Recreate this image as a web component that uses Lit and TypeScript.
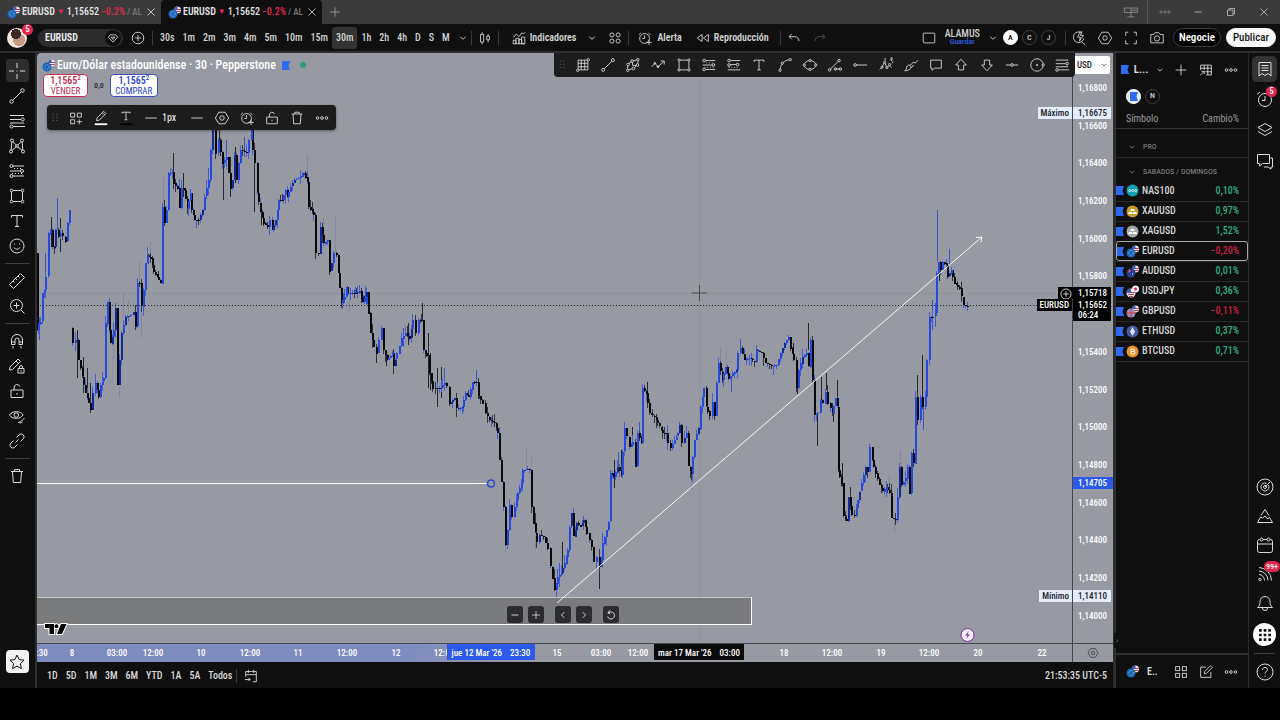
import { LitElement, html, css, svg } from "lit";
import { customElement } from "lit/decorators.js";

/* ---------- icons, drawn on an 18 x 18 grid ---------- */
const clock = svg`<circle cx="8.5" cy="9.5" r="5.5"/><path d="M8.500 6v3.500H6M2 5.500 4.500 3M12.500 3 15 5.500"/>`;
const ICONS: Record<string, unknown> = {
  cross: svg`<path d="M9 1v5M9 12v5M1 9h5M12 9h5M8.500 9h1"/>`,
  trend: svg`<circle cx="3.500" cy="14.500" r="1.700"/><circle cx="14.500" cy="3.500" r="1.700"/><path d="m4.800 13.200 8.400-8.400"/>`,
  hlines: svg`<path d="M2 3.500h14M2 7.500h11M5 14.500h12M2 11h14"/><circle cx="14.700" cy="7.500" r="1.500"/><circle cx="3.500" cy="14.500" r="1.500"/>`,
  pattern: svg`<circle cx="4" cy="3.500" r="1.500"/><circle cx="14" cy="3.500" r="1.500"/><circle cx="3" cy="14.500" r="1.500"/><circle cx="15" cy="14.500" r="1.500"/><circle cx="9" cy="9" r="1.300"/><path d="M3.800 5 3.200 13M14.200 5l.6 8M5 4.700l3 3.200M13 4.700 10 7.900M4 13.300 8 10M14 13.300 10 10"/>`,
  fib: svg`<circle cx="3.500" cy="4" r="1.500"/><circle cx="14" cy="9" r="1.500"/><circle cx="3.500" cy="14" r="1.500"/><path d="M5 4h11M2 9h10.500M5 14h11" /><path stroke-dasharray="1 2" d="M6 6.500h9M4 11.500h10"/>`,
  fib2: svg`<circle cx="3.500" cy="4" r="1.500"/><circle cx="13" cy="8.500" r="1.500"/><circle cx="3.500" cy="9" r="1.500"/><path d="M5 4h11M5 8.500h6.500M2 14.500h14"/><path stroke-dasharray="1 2" d="M3 11.700h12"/>`,
  rect: svg`<path d="M3.500 5v8M14.500 5v8M5 3.500h8M5 14.500h8"/><circle cx="3.500" cy="3.500" r="1.300"/><circle cx="14.500" cy="3.500" r="1.300"/><circle cx="3.500" cy="14.500" r="1.300"/><circle cx="14.500" cy="14.500" r="1.300"/>`,
  text: svg`<path d="M3.500 5.500v-2h11v2M9 3.500v11M7 14.500h4"/>`,
  smile: svg`<circle cx="9" cy="9" r="7"/><path d="M6 10.500c1 2.200 5 2.200 6 0M6.500 6.500v1M11.500 6.500v1"/>`,
  ruler: svg`<path d="m1.500 12.500 11-11 4 4-11 11zM5 9l1.500 1.500M7.500 6.500 9 8M10 4l1.500 1.500"/>`,
  zoom: svg`<circle cx="8.500" cy="8.500" r="6"/><path d="m13 13 3.500 3.500M8.500 5.500v6M5.500 8.500h6"/>`,
  magnet: svg`<path d="M3.500 12.500V8a5.500 5.500 0 0 1 11 0v4.500h-3.500V8a2 2 0 0 0-4 0v4.500zM3.500 10h3.500M11 10h3.500M5 14v2.500M13 14v2.500"/>`,
  penlock: svg`<path d="m1.500 13 .5-3L10 2l2.500 2.500-8 8zM8 4l2.500 2.500"/><path d="M10 11.500h6v4.500h-6zM11.500 11.500V10a1.500 1.500 0 0 1 3 0v1.500M13 13v1.500"/>`,
  lock: svg`<path d="M3 8h12v7.500H3zM6 8V5.500a3 3 0 0 1 5.800-1M9 11v1.800"/>`,
  eye: svg`<path d="M1.500 8C4 3.500 12.500 3.500 15 8c-2.500 4.500-11 4.500-13.500 0z"/><circle cx="8.300" cy="8" r="2.300"/><path d="m16.500 11-3 3c-1 1-2 .5-3 1.500 1.500.7 3.200.3 4-.5"/>`,
  link: svg`<path d="m7.500 10.500 3-3M8.500 5.500l2.700-2.700a2.800 2.800 0 0 1 4 4L12.500 9.500M5.500 8.500l-2.700 2.700a2.800 2.800 0 0 0 4 4l2.700-2.700"/>`,
  trash: svg`<path d="M3 4.500h12M6.500 4.500v-2h5v2M4.500 4.500l.8 11h7.400l.8-11"/>`,
  star: svg`<path d="m9 2 2.100 4.600 4.900.6-3.600 3.400 1 5L9 13.100l-4.400 2.500 1-5L2 7.200l4.900-.6z"/>`,
  plus: svg`<path d="M9 3v12M3 9h12"/>`,
  pluscircle: svg`<circle cx="9" cy="9" r="6.500"/><path d="M9 5.500v7M5.500 9h7"/>`,
  gem: svg`<path d="M5.500 5h7L15 8l-6 6.500L3 8zM6.500 8 9 11l2.500-3z"/>`,
  chev: svg`<path d="m6 7.500 3 3 3-3"/>`,
  candles: svg`<path d="M4 5h3.500v8.500H4zM5.700 2.500V5M5.700 13.500V16M11 7h3v4h-3zM12.500 4.500V7M12.500 11v3"/>`,
  indic: svg`<path d="M2.500 15.500v-4h3v4M5.500 15.500V9.500h3.500v6M9 15.500v-5h3v5M12 15.500V8h3.500v7.500zM2 15.500h13.500M2.500 8.500 6 4.500l3 3 3.500-4.500 1.500 1.500 2-2"/>`,
  four: svg`<circle cx="5.500" cy="5.500" r="2.300"/><circle cx="12.500" cy="5.500" r="2.300"/><circle cx="5.500" cy="12.500" r="2.300"/><circle cx="12.500" cy="12.500" r="2.300"/>`,
  alarm: svg`${clock}<path d="M13.500 11v6M10.500 14h6"/>`,
  alarm2: svg`<circle cx="9" cy="10" r="6.500"/><path d="M9 6v4.500H6M1 4.500 4 2M14 2l3 2.500"/>`,
  rewind: svg`<path d="M8 5v8L2.500 9zM15 5v8L9.500 9z"/>`,
  undo: svg`<path d="M6.500 4.500 3.500 7.500l3 3M3.500 7.500H10c3 0 4.500 2 4.500 5"/>`,
  redo: svg`<path d="m11.500 4.500 3 3-3 3M14.500 7.500H8c-3 0-4.500 2-4.500 5"/>`,
  layout: svg`<rect x="2.500" y="3.500" width="13" height="11" rx="1"/>`,
  search: svg`<path d="M12.500 3.500a6 6 0 1 0 2 6M12 13l4 4M10.500 1.500 7.500 8h3l-1 4.500L14 6h-3.500l2-4.500"/>`,
  hex: svg`<path d="M5.500 2.500h7L16.500 9l-4 6.500h-7L1.500 9z"/><circle cx="9" cy="9" r="2.500"/>`,
  full: svg`<path d="M6 2.500H3v4M12 2.500h3v4M6 15.500H3v-4M12 15.500h3v-4"/>`,
  camera: svg`<path d="M2 5h3.500L7 3h4l1.500 2H16v9.500H2z"/><circle cx="9" cy="9.500" r="3"/>`,
  grid: svg`<path d="M3.500 3.500h11v11h-11zM7 3.500v11M11 3.500v11M3.500 7h11M3.500 11h11"/><circle cx="3" cy="15" r="1.300" fill="#1e1e1e"/><circle cx="15" cy="3" r="1.300" fill="#1e1e1e"/>`,
  brush: svg`<circle cx="3" cy="15" r="1.300"/><circle cx="3.500" cy="8.500" r="1.500"/><circle cx="8" cy="4.500" r="1.500"/><circle cx="14.500" cy="3" r="1.300"/><circle cx="14" cy="9" r="1.500"/><circle cx="9.500" cy="13" r="1.500"/><path d="M3 13.500V10M4.500 7.500 7 5.500M9.500 4.200l3.700-1M14.500 4.500v3M13 10l-2.500 2M8 13.200l-3.700 1.300M8.500 6v3.500h4"/>`,
  zig: svg`<path d="m2 11 3.500-4 3.500 4 6.500-6M12 4.500h4v4"/><circle cx="5.500" cy="7" r="1"/><circle cx="9" cy="11" r="1"/>`,
  curve: svg`<circle cx="3.500" cy="15" r="1.300"/><circle cx="6" cy="7" r="1.300"/><circle cx="15" cy="3" r="1.300"/><path d="M3.700 13.700C4 11 4.500 9.500 5.500 8.300M7 6.200C9 4.500 11 3.500 13.700 3.200"/>`,
  ellipse: svg`<ellipse cx="9" cy="9" rx="6.500" ry="5"/><circle cx="2.500" cy="9" r="1.300" fill="#1e1e1e"/><circle cx="15.500" cy="9" r="1.300" fill="#1e1e1e"/><circle cx="9" cy="4" r="1.300" fill="#1e1e1e"/><circle cx="9" cy="14" r="1.300" fill="#1e1e1e"/>`,
  ruler2: svg`<circle cx="3" cy="14.500" r="1.400"/><circle cx="13.500" cy="4" r="1.400"/><path d="m4 13.500 8.500-8.500M9 13.500h6"/><circle cx="9.500" cy="13.500" r="1.400"/><circle cx="15" cy="13.500" r="1.400"/>`,
  hray: svg`<circle cx="3.500" cy="9" r="1.500"/><path d="M5 9h12"/>`,
  elliott: svg`<path d="m2 14 2-2M5 10.500 7 6.500M8 7l1.500 4M10.500 11.500 13 9M13.500 10.500l1.500 1.500M16 7l1-2"/><circle cx="4.500" cy="11.500" r="1.200"/><circle cx="7.500" cy="6" r="1.200"/><circle cx="10" cy="12" r="1.200"/><circle cx="13" cy="8.500" r="1.200"/><path d="M8 1v3M14 1h2v1.500h-1.500V4H16"/>`,
  paint: svg`<path d="M2 15.500C4.500 15.500 3 9 7 9c3.500.5 2.500 6.500-5 6.500zM8.500 9 12 5.500l1.500 1.500L17 3.500M9.500 12l2.500-3"/>`,
  callout: svg`<path d="M3 3.500h12v9H7.500L4.500 15v-2.500H3z"/>`,
  up: svg`<path d="m9 2.500 6 6.500h-3v5.500H6V9H3z"/>`,
  down: svg`<path d="m9 15.500 6-6.500h-3V3.500H6V9H3z"/>`,
  hline: svg`<circle cx="9" cy="9" r="1.500"/><path d="M2 9h5.500M10.500 9H16"/>`,
  circle: svg`<circle cx="9" cy="9" r="7"/><circle cx="9" cy="9" r=".8"/><circle cx="16" cy="9" r="1.300" fill="#1e1e1e"/>`,
  widgets: svg`<path d="M3 3.500h4.500V8H3zM10.500 3.500H15V8h-4.500zM3 11h4.500v4.500H3zM12.700 10.500v5.500M10 13.200h5.500"/>`,
  squares: svg`<rect x="3" y="3" width="4.500" height="4.500"/><rect x="10.500" y="3" width="4.500" height="4.500"/><rect x="3" y="10.500" width="4.500" height="4.500"/><rect x="10.500" y="10.500" width="4.500" height="4.500"/>`,
  pen: svg`<path d="m4 12 .5-3L12 1.500 14.500 4 7 11.500zM10.500 3l2.500 2.500"/><path stroke="#fff" stroke-width="2" d="M2 16h14"/>`,
  tcolor: svg`<path d="M4.500 4V2.500h9V4M9 2.500v8.500M7.500 11h3"/><path stroke="#000" stroke-width="2" d="M2 16h14"/>`,
  line: svg`<path d="M2.500 9h13"/>`,
  dots: svg`<circle cx="4" cy="9" r="1.500"/><circle cx="9" cy="9" r="1.500"/><circle cx="14" cy="9" r="1.500"/>`,
  drag: svg`<path stroke-width="1.200" stroke-dasharray="1.200 2.400" d="M7 4v10M11 4v10"/>`,
  table: svg`<path d="M3 9V3.500h12v11H9M3 7h12M7 3.500V9M11 3.500v11M8 11h7M2.500 15 7 10.500M4 10.500h3v3"/>`,
  list: svg`<path d="M3 2.500h12v13.500l-3-2.500-3 2-3-2L3 16zM5.500 5.500h7M5.500 8h7M5.500 10.500h7"/>`,
  layers: svg`<path d="m9 2.500 7 4-7 4-7-4zM2 10.500l7 4 7-4"/>`,
  chat: svg`<path d="M1.500 2.500h12v9h-7l-3 2.500v-2.500h-2zM14 6h2.500v9H15v2l-3-2H8"/>`,
  radar: svg`<circle cx="9" cy="9" r="8"/><path d="M12.500 7a4 4 0 1 1-2-1.800M9 9l5-5"/><circle cx="9" cy="9" r="1.500"/>`,
  bulb: svg`<path d="M5 8.500 9 2.500l4 6M1.500 15.500h15l-3-5-2 1.500-2.500-3-2.500 2-2-1z"/>`,
  calendar: svg`<rect x="1.500" y="3.500" width="15" height="13" rx="2"/><path d="M1.500 8h15"/><circle cx="5.500" cy="3.500" r="1.500" fill="#0f0f0f"/><circle cx="12.500" cy="3.500" r="1.500" fill="#0f0f0f"/>`,
  rss: svg`<circle cx="4" cy="14.500" r="1.200"/><path d="M3 9.500a6 6 0 0 1 5.500 6M3 6a9.500 9.500 0 0 1 9 9.500M3 2.500A13 13 0 0 1 15.500 15.500"/>`,
  bell: svg`<path d="M1.500 13.500c2-1.500 2.500-3 2.500-6a5 5 0 0 1 10 0c0 3 .5 4.500 2.500 6zM6.500 14a2.500 2.500 0 0 0 5 0"/>`,
  apps: svg`<path stroke="#0f0f0f" stroke-width="2.600" stroke-dasharray="2.600 2" d="M3.100 4.400h12M3.100 9h12M3.100 13.600h12"/>`,
  help: svg`<circle cx="9" cy="9" r="8"/><path d="M6.500 7c0-3.500 5-3.200 5-.3C11.500 8.500 9 8.500 9 10.500M9 12.500v1"/>`,
  edit: svg`<path d="M9 3.500H3v11.500h11.500V9M7 11l.5-2.500L14 2l2 2-6.500 6.500z"/>`,
  goto: svg`<path d="M3 10V4h12v11.500h-4M3 7.500h12M6 2v3.500M12 2v3.500M2 13h6M6 11l2 2-2 2"/>`,
  minus: svg`<path d="M4.500 9h9"/>`,
  close: svg`<path d="m4.500 4.500 9 9M13.500 4.500l-9 9"/>`,
  restore: svg`<path d="M4.500 6.500h7v7h-7zM6.500 6.500v-2h7v7h-2"/>`,
  left: svg`<path d="M10.500 5.500 7 9l3.500 3.500"/>`,
  right: svg`<path d="M7.500 5.500 11 9l-3.500 3.500"/>`,
  reset: svg`<path d="M5 7.500a4.500 4.500 0 1 1-.3 3.500M8 3 5 5.500 8 8"/>`,
  screens: svg`<path d="M1.500 4.500h15v5h-15zM9 4.500v10M5 14.500h8M9 7h7"/>`,
};
const icon = (name: string, size = "m") =>
  html`<svg class="ic ${size}" viewBox="0 0 18 18" aria-hidden="true">${ICONS[name]}</svg>`;
const ibtn = (name: string, label: string, cls = "") =>
  html`<button class="ib ${cls}" aria-label=${label}>${icon(name)}</button>`;
const flag = html`<svg class="flag" viewBox="0 0 8 9" aria-hidden="true"><path d="M0 0h8L6.500 4.500 8 9H0z" fill="#2f6bf0"/></svg>`;

/* ---------- instrument badges ---------- */
const usTop = svg`<circle cx="9.500" cy="4" r="3.500" fill="#e8e8f0"/><path d="M6.500 5.500h6M7 3.500h6" stroke="#c8324a"/><path d="M6 4a3.500 3.500 0 0 1 3.500-3.500V4z" fill="#3b5bb5"/>`;
const BADGE: Record<string, unknown> = {
  EURUSD: svg`${usTop}<circle cx="5" cy="8" r="4.500" fill="#1c66b8"/><circle cx="5" cy="8" r="2.300" fill="none" stroke="#8ab6e8" stroke-dasharray="1 1"/>`,
  AUDUSD: svg`${usTop}<circle cx="5" cy="8" r="4.500" fill="#24408e"/><path d="M2 6h3M3.500 4.500v3" stroke="#e05060"/><path d="M6 9h1" stroke="#fff"/>`,
  USDJPY: svg`<circle cx="9.500" cy="4" r="3.500" fill="#f4f0f2"/><circle cx="9.500" cy="4" r="1.500" fill="#c8324a"/><circle cx="5" cy="8" r="4.500" fill="#eee"/><path d="M2 9.500h6M4 7.500h5M3 11.500h4" stroke="#c8324a"/><path d="M.5 8A4.500 4.500 0 0 1 5 3.500V8z" fill="#3b5bb5"/>`,
  GBPUSD: svg`${usTop}<circle cx="5" cy="8" r="4.500" fill="#8f9ac8"/><path d="M1 8h8M5 4v8" stroke="#d84a5c" stroke-width="1.500"/>`,
  NAS100: svg`<circle cx="6.500" cy="6.500" r="6" fill="#169fb0"/><circle cx="3.700" cy="6.500" r="1" fill="none" stroke="#fff" stroke-width=".8"/><circle cx="6.700" cy="6.500" r="1" fill="none" stroke="#fff" stroke-width=".8"/><circle cx="9.700" cy="6.500" r="1" fill="none" stroke="#fff" stroke-width=".8"/>`,
  XAUUSD: svg`<circle cx="6.500" cy="6.500" r="6" fill="#c79a2a"/><path d="M5 4h3l.8 2H4.200zM2.800 7h3l.7 2H2zM7.200 7h3l.8 2H6.500z" fill="#fff"/>`,
  XAGUSD: svg`<circle cx="6.500" cy="6.500" r="6" fill="#a5a8ac"/><path d="M5 4h3l.8 2H4.200zM2.800 7h3l.7 2H2zM7.200 7h3l.8 2H6.500z" fill="#fff"/>`,
  ETHUSD: svg`<circle cx="6.500" cy="6.500" r="6" fill="#4a5aa0"/><path d="m6.500 2 2.500 4.500L6.500 11 4 6.500z" fill="#dfe3f5"/>`,
  BTCUSD: svg`<circle cx="6.500" cy="6.500" r="6" fill="#e8922a"/><path d="M5 4h2.200a1.200 1.200 0 0 1 0 2.500H5zM5 6.500h2.700a1.200 1.200 0 0 1 0 2.500H5z" fill="none" stroke="#fff"/>`,
};
const badge = (s: string) => html`<svg class="badge" viewBox="0 0 13 13" aria-hidden="true">${BADGE[s]}</svg>`;

/* ---------- price path: x,y pairs in thirds of a pixel, with an origin for each group ---------- */
type Group = { o: [number, number]; d: string };
const GROUPS: Group[] = [
  { o: [36, 130], d: "5,370 6,600 10,580 15,575 20,490 27,480 30,440 38,430 40,310 45,300 50,350 58,350 60,300 68,320 75,310 82,320 90,335 95,280 103,240" },
  { o: [36, 130], d: "108,595 112,640 120,630 128,690 140,740 150,790 160,820 165,840 172,790 180,760 190,800 195,765 205,745 210,580 216,515 222,600 226,640 235,600 240,535 246,765 252,690 258,610 270,560 285,555 293,545 300,590 305,460 313,460 318,530 325,480 330,400 335,375 345,385 355,425 365,440 375,460 380,230 386,278 393,240 398,130 410,125 415,160 425,175 432,235 438,175 446,180 455,235 465,190 468,240 478,270 490,270 500,240 508,200 518,150 524,60 532,0 535,-10 540,70 548,30 560,100 573,80 585,175 592,150 597,75 602,150 610,100 615,60 632,70 640,30 647,0 652,60 658,100 665,190 675,245 685,280 695,290 703,270 710,300 720,270 730,210 740,210 750,180 755,200 765,170 778,150 790,145 805,128 815,155 820,230 835,255 840,370 848,370 855,290 865,340 875,330 882,425 888,400 895,370 903,375 908,430 918,520 925,490 932,470" },
  { o: [36, 130], d: "932,470 937,490 950,488 962,490 972,482 978,505 990,490" },
  { o: [340, 270], d: "75,100 82,65 86,130 93,190 103,230 110,250 118,210 125,175 132,240 143,270 158,250 163,288 172,250 185,205 198,190 210,205 220,150 228,190 236,150 247,150 253,240 262,255 270,310 280,355 300,355 315,340 322,350 330,400 345,385 352,415 368,412 377,370 388,380 398,335 410,335 418,378 430,400 437,430 450,450 465,460 475,490 480,570 486,635 492,710 498,825 505,780 511,705 517,740 525,710 535,670 545,640 550,600 565,597 570,600 575,710 582,760 592,815 600,795 612,800 625,835 632,890 645,960 655,920 665,910 675,880 684,840 690,770 697,730 703,800 712,760 722,770 733,750 742,790 755,830 763,875 772,860 780,890 787,870 790,820 800,780 808,755 813,610 822,620 833,590 845,615 855,475 862,500 870,530 880,515 888,590 895,490 905,520 910,355 920,370 930,430 945,440 960,470 970,490 980,490 985,520 993,535 1005,510 1015,490 1020,465 1027,520 1040,490 1047,590 1056,612" },
  { o: [340, 270], d: "5,100 20,70 40,68 60,65 70,95 82,65" },
  { o: [690, 190], d: "5,850 15,750 27,715 33,650 42,595 50,650 60,678 68,635 75,678 80,580 88,520 98,570 108,530 118,565 130,550 140,540 145,490 152,475 165,510 180,505 195,515 200,480 215,490 228,520 245,528 262,525 272,490 285,460 297,440 303,475 312,510 320,595 328,540 338,500 350,490 357,530 363,450 370,570 375,675 385,670 392,630 400,640 408,605 415,640 428,670 437,625 443,650 446,840 455,880 463,980 472,993 478,920 487,975 495,975 505,930 517,880 527,830 535,845 540,770 548,810 557,850 570,885 580,905 590,890 600,910 605,985 618,990 625,920 630,830 637,885 648,865 655,830 661,910 665,790 672,820 678,620 685,690 692,620 700,650 707,620 712,510 720,380 730,380 738,370 740,250 746,215 752,240 760,215 770,225 775,260 785,240 795,280 810,295 822,345 833,350" },
];
/* single long wicks: kind, x, top, bottom (b blue, k black, l faint) */
const WICKS: Group[] = [
  { o: [36, 130], d: "b,10,560,630 b,27,370,480 k,45,260,350 b,62,205,300 k,72,265,365 k,122,600,745 k,140,680,790 k,152,715,800 k,163,760,850 l,309,395,450 l,315,530,625 l,341,335,375 l,380,140,230 k,412,70,125 k,442,130,200 k,562,100,210 k,655,80,245 l,813,75,130 l,860,265,290 l,898,260,370 l,940,500,545 l,250,770,805 l,232,640,690 l,262,485,560 l,276,510,545 b,515,115,180 k,550,0,60 k,583,80,200 k,597,50,160 b,570,30,110 b,625,20,80 k,675,240,285" },
  { o: [340, 270], d: "k,247,100,150 k,265,190,355 k,270,250,360 k,290,295,410 k,302,290,385 l,557,530,600 l,573,560,600 l,495,830,850 l,585,800,840 k,665,815,910 k,778,890,957 l,1053,612,660 k,920,335,370 k,842,540,620 k,877,470,530 k,822,570,655 b,785,790,890 b,833,545,610 k,107,230,280 k,137,250,288 b,313,295,340 b,409,300,340 k,418,340,388 b,190,175,230 k,205,160,225 b,657,880,950 b,898,455,510 k,648,950,975" },
  { o: [690, 190], d: "b,742,60,215 b,778,178,225 k,355,400,480 k,380,670,768 k,392,560,630 k,407,550,600 k,440,570,640 k,682,555,620 k,695,495,620 l,612,985,1030 l,598,855,910 b,700,650,720 l,630,780,830 b,150,447,480 b,735,340,410 l,90,470,520 k,320,590,612 k,457,820,890 k,308,460,510 l,108,490,530 b,124,560,605 k,428,650,695 k,480,890,960 k,748,220,272 b,725,330,420 l,665,850,905 k,812,275,310" },
];
const parse = (g: Group) =>
  g.d.split(" ").map((p) => {
    const [x, y] = p.split(",").map(Number);
    return [g.o[0] + x / 3, g.o[1] + y / 3] as [number, number];
  });

function buildCandles() {
  const out = { b: "", k: "", d: "", wb: "", wk: "" };
  let seed = 7;
  const rnd = () => ((seed = (seed * 16807) % 2147483647) / 2147483647);
  for (const g of GROUPS) {
    const pts = parse(g);
    for (let i = 1; i < pts.length; i++) {
      const [x0, y0] = pts[i - 1];
      const [x1, y1] = pts[i];
      const n = Math.max(1, Math.round((x1 - x0) / 2));
      for (let j = 0; j < n; j++) {
        const a = y0 + ((y1 - y0) * j) / n;
        const c = y0 + ((y1 - y0) * (j + 1)) / n;
        const x = Math.round(x0 + ((x1 - x0) * (j + 1)) / n) - 1;
        const top = Math.round(Math.min(a, c));
        const h = Math.max(1, Math.round(Math.abs(c - a)));
        const up = c < a;
        const key = up ? (rnd() < 0.25 ? "d" : "b") : "k";
        out[key] += `M${x} ${top}h2v${h}h-2z`;
        const wt = Math.round(rnd() * rnd() * 10);
        const wl = Math.round(rnd() * rnd() * 10);
        const blueWick = up || rnd() < 0.3;
        out[blueWick ? "wb" : "wk"] += `M${x} ${top - wt}h1v${h + wt + wl}h-1z`;
      }
    }
  }
  return out;
}
function buildWicks() {
  const out: Record<string, string> = { b: "", k: "", l: "" };
  for (const g of WICKS)
    for (const w of g.d.split(" ")) {
      const [k, x, t, b] = w.split(",");
      const yt = Math.round(g.o[1] + +t / 3);
      const yb = Math.round(g.o[1] + +b / 3);
      out[k] += `M${Math.round(g.o[0] + +x / 3)} ${yt}h1v${yb - yt}h-1z`;
    }
  return out;
}
const C = buildCandles();
const W = buildWicks();

const PLOT = { x: 37, y: 53, w: 1035, h: 590 };
const px = (x: number) => `left:${(((x - PLOT.x) / PLOT.w) * 100).toFixed(3)}%`;
const priceTop = (p: number) => `top:${(((88 + ((1.168 - p) / 0.002) * 37.69 - PLOT.y) / PLOT.h) * 100).toFixed(3)}%`;
const fmt = (p: number) => p.toFixed(5).replace(".", ",");
const PRICES = [1.168, 1.166, 1.164, 1.162, 1.16, 1.158, 1.154, 1.152, 1.15, 1.148, 1.146, 1.144, 1.142, 1.14];
const TIMES: [number, string][] = [
  [42, ":30"], [72, "8"], [117, "03:00"], [153, "12:00"], [201, "10"], [250, "12:00"], [298, "11"], [347, "12:00"],
  [396, "12"], [444, "12:00"], [557, "15"], [601, "03:00"], [638, "12:00"], [784, "18"], [832, "12:00"], [881, "19"],
  [929, "12:00"], [978, "20"], [1042, "22"],
];
const LIST: [string, string][] = [
  ["NAS100", "0,10%"], ["XAUUSD", "0,97%"], ["XAGUSD", "1,52%"], ["EURUSD", "−0,20%"], ["AUDUSD", "0,01%"],
  ["USDJPY", "0,36%"], ["GBPUSD", "−0,11%"], ["ETHUSD", "0,37%"], ["BTCUSD", "0,71%"],
];

@customElement("app-root")
export class AppRoot extends LitElement {
  static styles = css`
    :host { display: block; height: 100vh; background: #000; color: #dbdbdb;
      font: 500 10px/14px "Roboto Condensed", Roboto, sans-serif; }
    * { box-sizing: border-box; }
    button, select { font: inherit; color: inherit; background: none; border: 0; padding: 0; margin: 0; }
    button { display: flex; align-items: center; justify-content: center; white-space: nowrap; }
    .ic { fill: none; stroke: currentColor; stroke-width: 1; flex: none; display: block; width: 16px; height: 16px; }
    .ic.xs { width: 12px; height: 12px; }
    .ic.s { width: 14px; height: 14px; }
    .ic.l { width: 18px; height: 18px; }
    .flag { width: 8px; height: 9px; flex: none; display: block; }
    .badge { width: 13px; height: 13px; flex: none; display: block; }
    .frame { height: 100%; padding-bottom: 32px; display: grid; grid-template-rows: 24px 27px 2px minmax(0, 1fr); }
    .red { color: #e0294a; }

    .tabs { background: #3b3b3b; display: flex; align-items: stretch; min-width: 0; }
    .tab { width: 161px; display: flex; align-items: center; gap: 2px; padding: 0 3px 0 7px; color: #e4e4e4; white-space: nowrap; }
    .tab.on { background: #0f0f0f; border-radius: 4px 4px 0 0; }
    .tab b { font-weight: 600; }
    .tab .arrow { font-size: 8px; }
    .tab .dim { color: #777; font-size: 9px; }
    .tab button { margin-left: auto; }
    .new { width: 26px; color: #a5a5a5; }
    .win { margin-left: auto; display: flex; color: #c4c4c4; }
    .win button { width: 33px; }
    .win .screens { border-right: 1px solid #555; color: #8a8a8a; }
    .win .more { color: #8a8a8a; }

    .bar { background: #0f0f0f; display: flex; align-items: center; color: #d4d4d4; padding: 0 4px 0 7px; min-width: 0; }
    .avatar { position: relative; width: 20px; height: 20px; border-radius: 50%; margin-right: 11px;
      background: radial-gradient(circle at 45% 30%, #3a2a22 0 28%, transparent 29%), radial-gradient(circle at 60% 60%, #c89a80 0 35%, #efe6e0 36%); }
    .pill { position: absolute; background: #e0254d; color: #fff; border-radius: 6px; font-size: 9px; line-height: 11px; height: 11px; min-width: 11px; text-align: center; }
    .avatar .pill { right: -6px; top: -4px; }
    .symbol { width: 85px; height: 18px; border-radius: 9px; background: #2c2c2c; justify-content: space-between; padding: 0 2px 0 7px; font-weight: 700; color: #e8e8e8; }
    .symbol .gem { width: 16px; height: 16px; border-radius: 50%; background: #0f0f0f; display: grid; place-items: center; }
    .ib { width: 26px; height: 22px; flex: none; }
    .ib.cmp { width: 29px; }
    .ib.w16 { width: 16px; }
    .ib.w20 { width: 20px; }
    .ib.fade { color: #555; }
    .vr { width: 1px; height: 14px; background: #3a3a3a; flex: none; }
    .ints { display: flex; margin: 0 1px 0 3px; }
    .ints button { height: 22px; padding: 0 4px; border-radius: 3px; }
    .ints .on { background: #333; }
    .lab { gap: 3px; height: 22px; font-weight: 600; padding: 0 6px 0 12px; }
    .lab.alert { gap: 4px; padding: 0 5px 0 8px; }
    .lab.wide { padding: 0 11px 0 8px; }
    .right { margin-left: auto; display: flex; align-items: center; }
    .right .vr { margin-left: 5px; }
    .save { display: flex; flex-direction: column; align-items: center; line-height: 9px; padding: 0 3px 0 8px; }
    .save a { color: #2f5ce8; font-size: 8px; line-height: 8px; text-decoration: none; }
    .ring { width: 15px; height: 15px; border-radius: 50%; border: 1px solid #3f3f3f; font-size: 8px; margin-right: 4px; flex: none; }
    .ring.on { background: #fff; color: #000; border-color: #fff; }
    .round { height: 19px; border-radius: 10px; padding: 0 5px; font-size: 11px; font-weight: 600; border: 1px solid #3a3a3a; background: #000; color: #fff; margin-left: 3px; }
    .round.light { background: #fafafa; color: #161616; border-color: #fafafa; margin-left: 5px; padding: 0 6px; font-weight: 500; }

    .rule { background: #2e2e2e; }
    .main { background: #0f0f0f; display: grid; grid-template-columns: 37px minmax(0, 1fr) 136px 31px; min-height: 0; }
    .side { border-right: 2px solid #2e2e2e; display: flex; flex-direction: column; align-items: center; padding: 6px 1px 15px 0; }
    .side button { width: 23px; height: 23px; margin-bottom: 2px; border-radius: 4px; }
    .side .on { background: #2e2e2e; }
    .side .star { margin: auto 0 0; background: #f2f2f2; color: #111; }
    .side hr { width: 25px; height: 1px; border: 0; background: #3c3c3c; margin: 4px 0 5px; }

    .chartcol { display: grid; grid-template-rows: minmax(0, 1fr) 19px 26px; min-height: 0; }
    .plotrow { display: grid; grid-template-columns: minmax(0, 1fr) 41px; background: #979aa3; border-radius: 4px 0 0 0; position: relative; min-height: 0; }
    .plot { position: relative; overflow: hidden; min-width: 0; }
    .draw { position: absolute; inset: 0; width: 100%; height: 100%; }
    .legend { position: relative; display: flex; align-items: center; gap: 2px; color: #fff; font-size: 12px; font-weight: 500; padding: 4px 0 0 5px; line-height: 16px; }
    .legend .flag { margin-left: 4px; }
    .legend .dot { width: 6px; height: 6px; border-radius: 50%; background: #2f9b7c; margin-left: 8px; }
    .trade { position: relative; display: flex; align-items: center; padding: 1px 0 0 6px; gap: 6px; }
    .trade button { width: 45px; height: 23px; background: #fff; border: 1px solid #c8325a; color: #c01f48; border-radius: 4px; flex-direction: column; font-size: 9px; line-height: 10px; }
    .trade sup { font-size: 7px; line-height: 0; }
    .trade .px { font-size: 10px; }
    .trade .cap { font-weight: 400; }
    .trade .buy { width: 48px; border-color: #3c50c0; color: #2340c8; }
    .trade .spread { font-size: 8px; color: #26272b; }
    .props { position: absolute; left: 10px; top: 52px; height: 25px; width: 289px; background: #1c1c1c; border-radius: 4px; display: flex; align-items: center; box-shadow: 0 1px 3px #0006; }
    .props .ib { width: 25px; }
    .props .drag, .shapes .drag { width: 16px; color: #666; }
    .props .w { display: flex; align-items: center; gap: 3px; width: 46px; padding-left: 5px; justify-content: flex-start; }
    .shapes { position: absolute; right: 38px; top: 0; height: 24px; width: 521px; max-width: 100%; background: #1c1c1c; border-radius: 0 0 4px 4px; display: flex; align-items: center; }
    .shapes .ib { flex: 1 1 0; width: auto; }
    .shapes .drag { flex: 0 0 15px; }
    .nav { position: absolute; left: 50%; bottom: 20px; transform: translateX(-48px); display: flex; gap: 5px; }
    .nav button { width: 16px; height: 17px; border-radius: 3px; background: #2b2c2f; color: #fff; }
    .nav .sp { margin-left: 6px; }
    .tv { position: absolute; left: 7px; bottom: 6px; width: 24px; height: 16px; }

    .axis { position: relative; border-left: 1px solid #45474e; color: #fff; font-size: 9px; font-weight: 500; }
    .axis span { position: absolute; left: 0; width: 38px; height: 12px; line-height: 12px; margin-top: -6px; padding-left: 5px; white-space: nowrap; }
    .cur { position: absolute; left: 0; top: 3px; width: 37px; height: 18px; color: #222; background: #fff; border-radius: 2px; display: flex; align-items: center; justify-content: flex-end; }
    .cur select { position: absolute; inset: 0; appearance: none; padding-left: 4px; width: 100%; }
    .axis .pale { background: #e4ecfa; color: #22242a; margin-top: -5px; }
    .axis .tag { right: 100%; left: auto; width: auto; padding: 0 3px; margin-right: 1px; }
    .axis .black { background: #000; margin-top: -5px; }
    .axis .two { height: 22px; line-height: 10px; padding-top: 1px; }
    .axis .blue { background: #2b5aec; width: 40px; }
    .axis .add { background: #000; right: 100%; left: auto; width: 15px; padding: 0; margin-top: -5px; display: grid; place-items: center; }
    .corner { border-left: 1px solid #45474e; border-top: 1px solid #45474e; display: grid; place-items: center; color: #26272b; background: #979aa3; }
    .time { display: grid; grid-template-columns: minmax(0, 1fr) 41px; }
    .ticks { position: relative; overflow: hidden; border-top: 1px solid #45474e; color: #fff; font-size: 9px; font-weight: 500;
      background: linear-gradient(90deg, #7f8bbf 0 36%, #979aa3 48%); }
    .ticks span { position: absolute; top: 2px; line-height: 14px; transform: translateX(-50%); white-space: nowrap; }
    .ticks .tag { top: 0; height: 16px; line-height: 18px; width: 88px; text-align: center; background: #2b5aec; }
    .ticks .tag.black { background: #0a0a0a; width: 90px; }
    .ticks i { font-style: normal; margin-left: 8px; }
    .foot { display: flex; align-items: center; padding: 1px 6px 0 6px; }
    .foot button { height: 20px; padding: 0 4px; }
    .foot .go { padding: 0; margin-left: 6px; }
    .foot time { margin-left: auto; }

    .watch { border-left: 3px solid #2e2e2e; border-right: 1px solid #2a2a2a; display: flex; flex-direction: column; min-height: 0; position: relative; }
    .wh { display: flex; align-items: center; height: 33px; padding-left: 10px; }
    .wh .name { gap: 5px; font-size: 11px; font-weight: 600; width: 36px; margin-right: 6px; }
    .wh .ib { width: 25px; }
    .sets { display: flex; align-items: center; gap: 4px; height: 20px; padding-left: 10px; }
    .sets .ring { margin: 0; }
    .sets .ring.on { background: #e6eefc; }
    table { border-collapse: collapse; width: 100%; table-layout: fixed; }
    th { font-weight: 400; color: #9a9a9a; text-align: left; padding: 4px 0 0 10px; height: 22px; }
    th:last-child, .row td:last-child { text-align: right; padding: 0 9px 0 0; width: 58px; }
    thead th:last-child { padding-top: 4px; }
    thead tr { border-bottom: 1px solid #333; }
    .sec { height: 29px; }
    .sec th:last-child { font-size: 8px; padding-left: 9px; color: #8c8c8c; text-align: left; }
    .sec th div { display: flex; align-items: center; gap: 4px; }
    .sec.pro { border-bottom: 1px solid #2a2a2a; }
    .sec.pro th:last-child { padding-top: 9px; }
    .sec.sab { height: 24px; }
    .sec.sab th:last-child { padding-top: 5px; }
    .row td { height: 20px; padding: 0; border-bottom: 1px solid #2a2a2a; color: #d8d8d8; }
    .row div { display: flex; align-items: center; gap: 3px; }
    .row .badge { margin-left: -1px; }
    .row td.up { color: #2fae80; }
    .row td.down { color: #c81f40; }
    .row.on { outline: 1px solid #a8a8a8; outline-offset: -1px; border-radius: 3px; }
    .wf { margin-top: auto; height: 35px; border-top: 2px solid #2e2e2e; display: flex; align-items: center; padding-left: 10px; }
    .wf .nm { gap: 8px; font-weight: 600; width: 42px; justify-content: flex-start; }
    .wf .ib { width: 25px; }
    .grip { position: absolute; left: -2px; bottom: 40px; width: 5px; height: 15px; background: #0f0f0f; border-radius: 0 3px 3px 0; color: #aaa; }
    .grip .ic { width: 8px; height: 8px; }

    .rail { display: flex; flex-direction: column; align-items: center; padding: 3px 0 4px; }
    .rail button { position: relative; width: 25px; height: 26px; margin-bottom: 5px; border-radius: 5px; }
    .rail .low { height: 25px; margin-bottom: 4px; }
    .rail .on { background: #333; margin-bottom: 4px; }
    .rail .push { margin-top: auto; }
    .rail .white { width: 23px; height: 23px; border-radius: 50%; background: #fff; margin: 4px 0 7px; }
    .rail hr { width: 21px; height: 1px; border: 0; background: #3c3c3c; margin: 0 0 5px; }
    .rail .low:last-child { margin-bottom: 0; }
    .rail .pill { right: 0; top: 0; }
    .rail .pill.n { right: -3px; top: 0; padding: 0 2px; font-size: 8px; }
  `;

  private tab(on: boolean) {
    return html`<div class="tab ${on ? "on" : ""}">${badge("EURUSD")}<b>EURUSD</b><span class="red arrow">▼</span><span>1,15652</span>
      <span class="red">−0.2%</span><span class="dim">/ AL</span><button aria-label="Cerrar pestaña">${icon("close", "s")}</button></div>`;
  }

  private toolbar() {
    const ints = ["30s", "1m", "2m", "3m", "4m", "5m", "10m", "15m", "30m", "1h", "2h", "4h", "D", "S", "M"];
    return html`<header class="bar">
      <button class="avatar" aria-label="Perfil"><span class="pill">5</span></button>
      <button class="symbol">EURUSD<span class="gem">${icon("gem", "s")}</span></button>
      ${ibtn("pluscircle", "Comparar", "cmp")}<span class="vr"></span>
      <div class="ints">${ints.map((t) => html`<button class=${t === "30m" ? "on" : ""}>${t}</button>`)}</div>
      ${ibtn("chev", "Intervalos", "w16")}<span class="vr"></span>
      ${ibtn("candles", "Tipo de gráfico")}<span class="vr"></span>
      <button class="lab">${icon("indic")}Indicadores</button>${ibtn("chev", "Favoritos", "w20")}
      ${ibtn("four", "Plantillas")}<span class="vr"></span>
      <button class="lab alert">${icon("alarm")}Alerta</button>
      <button class="lab wide">${icon("rewind")}Reproducción</button><span class="vr"></span>
      ${ibtn("undo", "Deshacer")}${ibtn("redo", "Rehacer", "fade")}
      <div class="right">
        ${icon("layout")}
        <div class="save"><span>ALAMUS</span><a href="#guardar">Guardar</a></div>
        ${ibtn("chev", "Diseños", "w20")}
        <button class="ring on">A</button><button class="ring">C</button><button class="ring">J</button>
        <span class="vr"></span>
        ${ibtn("search", "Búsqueda rápida")}${ibtn("hex", "Configuración")}${ibtn("full", "Pantalla completa")}${ibtn("camera", "Captura")}
        <button class="round">Negocie</button><button class="round light">Publicar</button>
      </div></header>`;
  }

  private leftSide() {
    const a: [string, string][] = [["cross", "Cursor"], ["trend", "Líneas"], ["hlines", "Fibonacci"], ["pattern", "Patrones"], ["fib", "Proyección"], ["rect", "Formas"], ["text", "Texto"], ["smile", "Iconos"]];
    const b: [string, string][] = [["ruler", "Medir"], ["zoom", "Acercar"]];
    const c: [string, string][] = [["magnet", "Imán"], ["penlock", "Mantener dibujo"], ["lock", "Bloquear"], ["eye", "Ocultar"], ["link", "Sincronizar"]];
    const one = ([n, l]: [string, string], i: number, on = false) => html`<button class=${on && i === 0 ? "on" : ""} aria-label=${l}>${icon(n, "l")}</button>`;
    return html`<nav class="side">${a.map((x, i) => one(x, i, true))}<hr />${b.map((x, i) => one(x, i))}<hr />${c.map((x, i) => one(x, i))}<hr />
      <button aria-label="Eliminar">${icon("trash", "l")}</button>
      <button class="star" aria-label="Favoritos">${icon("star", "l")}</button></nav>`;
  }

  private drawing() {
    return html`<svg class="draw" viewBox="37 53 1035 590" preserveAspectRatio="none" aria-label="EURUSD 30">
      <g shape-rendering="crispEdges">
        <path d="M37 293.500H1072M699.500 76V643" stroke="#8f929b" fill="none"/>
        <rect x="30" y="597.500" width="721.500" height="27" fill="#7a7b7d" stroke="#fff"/>
        <path d="M37 597.500H751" stroke="#c4c5c9"/>
        <path d=${W.l} fill="#8486a2"/><path d=${W.b} fill="#3a55cc"/><path d=${W.k} fill="#26282f"/>
        <path d=${C.wb} fill="#4560cf"/><path d=${C.wk} fill="#35373e"/>
        <path d=${C.k} fill="#08090d"/><path d=${C.b} fill="#2549de"/><path d=${C.d} fill="#12299a"/>
        <path d="M37 305.500H1072" stroke="#25272e" stroke-dasharray="1 2" fill="none"/>
        <path d="M37 483.500H487" stroke="#fff"/>
      </g>
      <path d="M557 603 982 237M976 237.500 982 237l-1 5.500" stroke="#f4f4f6" fill="none"/>
      <circle cx="491" cy="483.500" r="3.500" fill="#979aa3" stroke="#2549c8" stroke-width="1.500"/>
      <path d="M691.500 293H707M699.500 285v16" stroke="#4a4c52" fill="none"/>
      <circle cx="967.500" cy="635" r="6.500" fill="#f6f0fb" stroke="#7a2f9a"/>
      <path d="m969 631-4 4.500h2.500l-1.500 3.500 4-4.500h-2.500z" fill="#7a2f9a"/>
    </svg>`;
  }

  private chart() {
    const shapes = ["grid", "trend", "brush", "zig", "rect", "fib", "fib2", "text", "curve", "ellipse", "ruler2", "hray", "elliott", "paint", "callout", "up", "down", "hline", "circle", "hlines"];
    return html`<section class="chartcol">
      <div class="plotrow">
        <div class="plot">
          ${this.drawing()}
          <div class="legend">${badge("EURUSD")}<span>Euro/Dólar estadounidense · 30 · Pepperstone</span>${flag}<span class="dot"></span></div>
          <div class="trade"><button><span class="px">1,1565<sup>2</sup></span><span class="cap">VENDER</span></button><span class="spread">0,0</span>
            <button class="buy"><span class="px">1,1565<sup>2</sup></span><span class="cap">COMPRAR</span></button></div>
          <div class="props">
            ${ibtn("drag", "Mover", "drag")}${ibtn("widgets", "Plantilla")}${ibtn("pen", "Color de línea")}${ibtn("tcolor", "Color de texto")}
            <button class="w">${icon("line")}1px</button>
            ${["line", "hex", "alarm", "lock", "trash", "dots"].map((n) => ibtn(n, n))}
          </div>
          <svg class="tv" viewBox="0 0 24 16" aria-label="TradingView"><path d="M1 3h9v10H5.500V7H1zM12.500 3.200a2 2 0 1 1 0 4 2 2 0 0 1 0-4zM17 3h5.500L18 13h-5z" fill="#000" stroke="#fff" stroke-width="2" paint-order="stroke"/></svg>
          <div class="nav">
            <button aria-label="Alejar">${icon("minus", "s")}</button><button aria-label="Acercar">${icon("plus", "xs")}</button>
            <button class="sp" aria-label="Atrás">${icon("left", "s")}</button><button aria-label="Adelante">${icon("right", "s")}</button>
            <button class="sp" aria-label="Restablecer">${icon("reset", "s")}</button>
          </div>
        </div>
        <div class="axis">
          ${PRICES.map((p) => html`<span style=${priceTop(p)}>${fmt(p)}</span>`)}
          <span class="pale tag" style=${priceTop(1.16675)}>Máximo</span><span class="pale" style=${priceTop(1.16675)}>1,16675</span>
          <span class="pale tag" style=${priceTop(1.1411)}>Mínimo</span><span class="pale" style=${priceTop(1.1411)}>1,14110</span>
          <span class="blue" style=${priceTop(1.14705)}>1,14705</span>
          <span class="add" style=${priceTop(1.15718)}>${icon("pluscircle", "s")}</span><span class="black" style=${priceTop(1.15718)}>1,15718</span>
          <span class="black tag" style=${priceTop(1.15652)}>EURUSD</span><span class="black two" style=${priceTop(1.15652)}>1,15652<br />06:24</span>
          <label class="cur"><select aria-label="Divisa"><option>USD</option></select>${icon("chev", "xs")}</label>
        </div>
        <div class="shapes">${ibtn("drag", "Mover", "drag")}${shapes.map((n) => ibtn(n, n))}</div>
      </div>
      <div class="time">
        <div class="ticks">
          ${TIMES.map(([x, t]) => html`<span style=${px(x)}>${t}</span>`)}
          <span class="tag" style=${px(491)}>jue 12 Mar '26<i>23:30</i></span>
          <span class="tag black" style=${px(699)}>mar 17 Mar '26<i>03:00</i></span>
        </div>
        <div class="corner">${icon("hex", "xs")}</div>
      </div>
      <footer class="foot">${["1D", "5D", "1M", "3M", "6M", "YTD", "1A", "5A", "Todos"].map((t) => html`<button>${t}</button>`)}
        <span class="vr"></span><button class="go" aria-label="Ir a">${icon("goto")}</button><time>21:53:35 UTC-5</time></footer>
    </section>`;
  }

  private watch() {
    return html`<aside class="watch">
      <div class="wh"><button class="name">${flag}<span>L...</span>${icon("chev", "s")}</button>
        ${ibtn("plus", "Añadir")}${ibtn("table", "Vista")}${ibtn("dots", "Más")}</div>
      <div class="sets"><button class="ring on" aria-label="Lista azul">${flag}</button><button class="ring">N</button></div>
      <table>
        <thead><tr><th scope="col">Símbolo</th><th scope="col">Cambio%</th></tr></thead>
        <tbody>
          <tr class="sec pro"><th colspan="2"><div>${icon("chev", "s")}PRO</div></th></tr>
          <tr class="sec sab"><th colspan="2"><div>${icon("chev", "s")}SABADOS / DOMINGOS</div></th></tr>
          ${LIST.map(([s, v]) => html`<tr class="row ${s === "EURUSD" ? "on" : ""}"><td><div>${flag}${badge(s)}${s}</div></td><td class=${v[0] === "−" ? "down" : "up"}>${v}</td></tr>`)}
        </tbody>
      </table>
      <button class="grip" aria-label="Ocultar panel">${icon("right", "s")}</button>
      <div class="wf"><button class="nm">${badge("EURUSD")}E..</button>${ibtn("squares", "Detalles")}${ibtn("edit", "Notas")}${ibtn("dots", "Más")}</div>
    </aside>`;
  }

  private rail() {
    const b = (n: string, l: string, cls = "", extra: unknown = "") => html`<button class=${cls} aria-label=${l}>${icon(n, "l")}${extra}</button>`;
    return html`<nav class="rail">
      ${b("list", "Lista", "on")}${b("alarm2", "Alertas", "", html`<span class="pill">5</span>`)}${b("layers", "Objetos")}${b("chat", "Chat")}
      ${b("radar", "Filtros", "low push")}${b("bulb", "Ideas", "low")}${b("calendar", "Calendario", "low")}
      ${b("rss", "Noticias", "low", html`<span class="pill n">99+</span>`)}${b("bell", "Notificaciones", "low")}
      ${b("apps", "Productos", "white")}<hr />${b("help", "Ayuda", "low")}
    </nav>`;
  }

  render() {
    return html`<div class="frame">
      <div class="tabs">${this.tab(false)}${this.tab(true)}<button class="new" aria-label="Nueva pestaña">${icon("plus", "s")}</button>
        <div class="win"><button class="screens" aria-label="Pantallas">${icon("screens")}</button><button class="more" aria-label="Menú">${icon("dots", "s")}</button>
          <button aria-label="Minimizar">${icon("minus", "s")}</button><button aria-label="Restaurar">${icon("restore", "s")}</button><button aria-label="Cerrar">${icon("close", "s")}</button></div></div>
      ${this.toolbar()}
      <div class="rule"></div>
      <div class="main">${this.leftSide()}${this.chart()}${this.watch()}${this.rail()}</div>
    </div>`;
  }
}
